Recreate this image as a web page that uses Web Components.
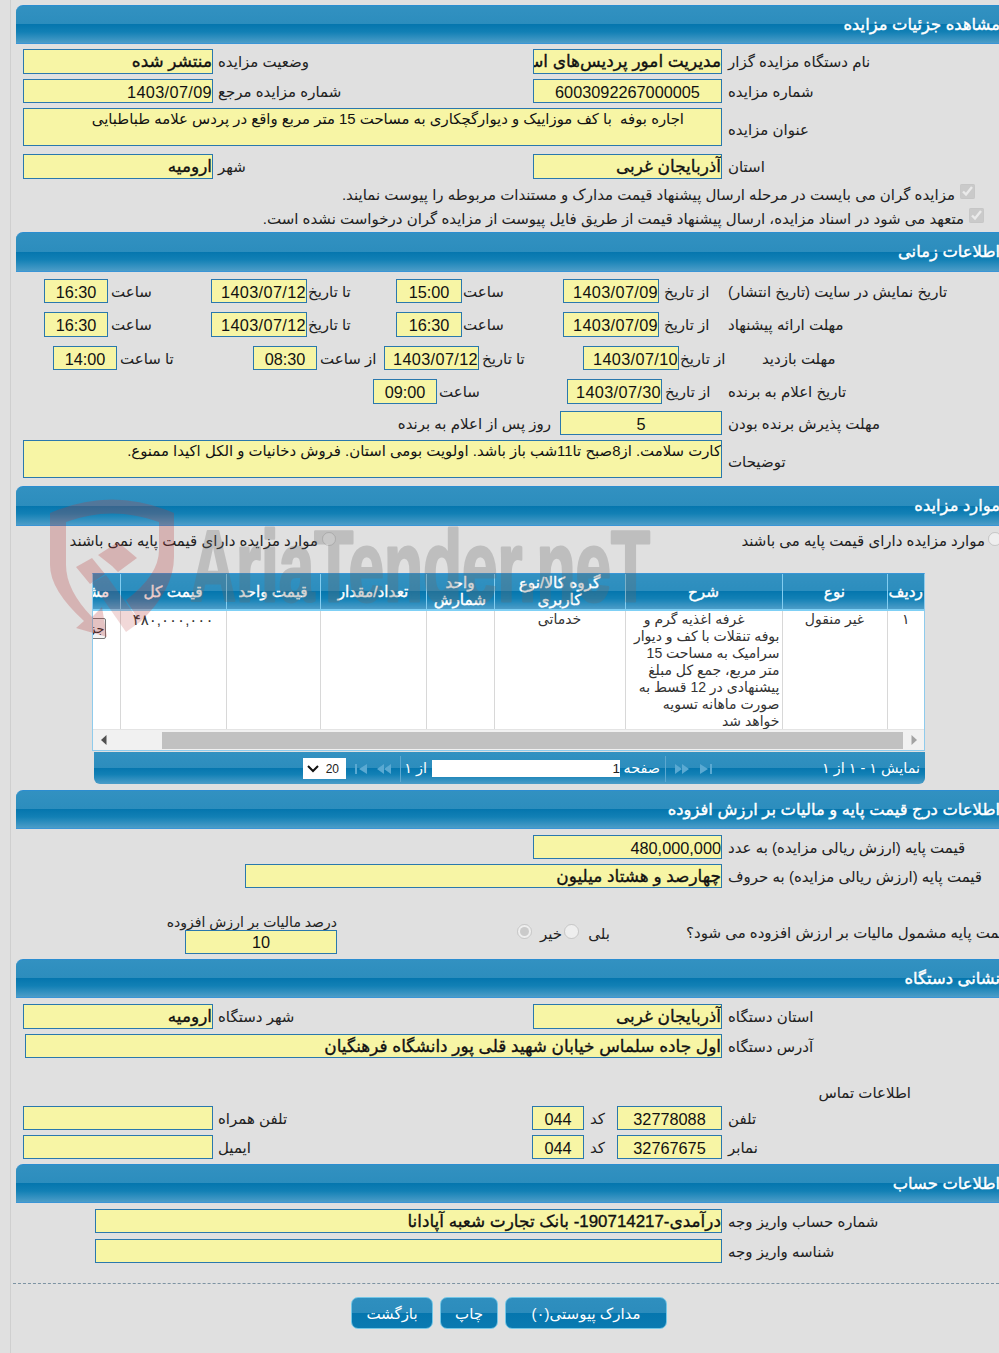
<!DOCTYPE html>
<html lang="fa"><head><meta charset="utf-8"><title>مشاهده جزئیات مزایده</title>
<style>
html,body{margin:0;padding:0;overflow:hidden;background:#e0e0e0;height:1353px}
body{font-family:"Liberation Sans","DejaVu Sans",sans-serif;color:#1c1c1c}
</style></head><body>
<x-page>
<x-head t="5" h="39">مشاهده جزئیات مزایده</x-head>
<x-row t="5" h="25"><x-l w="277">نام دستگاه مزایده گزار</x-l><x-box w="189" b>مدیریت امور پردیس‌های استان آذربایجان غربی</x-box><x-l w="320" pad="5">وضعیت مزایده</x-l><x-box w="190" b>منتشر شده</x-box></x-row>
<x-row t="5" h="24"><x-l w="277">شماره مزایده</x-l><x-box w="189" c>6003092267000005</x-box><x-l w="320" pad="5">شماره مزایده مرجع</x-l><x-box w="190">1403/07/09</x-box></x-row>
<x-row t="5" h="38"><x-l w="277" pt="4">عنوان مزایده</x-l><x-box w="699" m pr="37">اجاره بوفه  با کف موزاییک و دیوارگچکاری به مساحت 15 متر مربع واقع در پردس علامه طباطبایی</x-box></x-row>
<x-row t="8" h="25"><x-l w="277">استان</x-l><x-box w="189" b>آذربایجان غربی</x-box><x-l w="320" pad="5">شهر</x-l><x-box w="190" b>ارومیه</x-box></x-row>
<x-row t="3" h="24"><x-check w="15" pr="24" top="2" type="checkbox"></x-check><x-l w="700" r pr="5">مزایده گران می بایست در مرحله ارسال پیشنهاد قیمت مدارک و مستندات مربوطه را پیوست نمایند.</x-l></x-row>
<x-row t="0" h="24"><x-check w="15" pr="15" top="2" type="checkbox"></x-check><x-l w="800" r pr="5">متعهد می شود در اسناد مزایده، ارسال پیشنهاد قیمت از طریق فایل پیوست از مزایده گران درخواست نشده است.</x-l></x-row>
<x-head t="2" h="40">اطلاعات زمانی</x-head>
<x-row t="7" h="24"><x-l w="277">تاریخ نمایش در سایت (تاریخ انتشار)</x-l><x-l w="63" pad="5">از تاریخ</x-l><x-box w="96">1403/07/09</x-box><x-l w="101" pad="1">ساعت</x-l><x-box w="66" c>15:00</x-box><x-l w="89" pad="1">تا تاریخ</x-l><x-box w="96">1403/07/12</x-box><x-l w="103" pad="3">ساعت</x-l><x-box w="64" c>16:30</x-box></x-row>
<x-row t="9" h="25"><x-l w="277">مهلت ارائه پیشنهاد</x-l><x-l w="63" pad="5">از تاریخ</x-l><x-box w="96">1403/07/09</x-box><x-l w="101" pad="1">ساعت</x-l><x-box w="66" c>16:30</x-box><x-l w="89" pad="1">تا تاریخ</x-l><x-box w="96">1403/07/12</x-box><x-l w="103" pad="3">ساعت</x-l><x-box w="64" c>16:30</x-box></x-row>
<x-row t="9" h="24"><x-l w="275" pad="38">مهلت بازدید</x-l><x-l w="45" pad="1">از تاریخ</x-l><x-box w="96">1403/07/10</x-box><x-l w="104" pad="3">تا تاریخ</x-l><x-box w="95">1403/07/12</x-box><x-l w="67" pad="3">از ساعت</x-l><x-box w="64" c>08:30</x-box><x-l w="136" pad="3">تا ساعت</x-l><x-box w="64" c>14:00</x-box></x-row>
<x-row t="9" h="25"><x-l w="292" pad="21">تاریخ اعلام به برنده</x-l><x-l w="45" pad="3">از تاریخ</x-l><x-box w="95">1403/07/30</x-box><x-l w="130" pad="2">ساعت</x-l><x-box w="64" c>09:00</x-box></x-row>
<x-row t="7" h="24"><x-l w="277">مهلت پذیرش برنده بودن</x-l><x-box w="162" c>5</x-box><x-l w="300" r pr="9">روز پس از اعلام به برنده</x-l></x-row>
<x-row t="5" h="38"><x-l w="277" pt="4">توضیحات</x-l><x-box w="699" m>کارت سلامت. از8صبح تا11شب باز باشد. اولویت بومی استان. فروش دخانیات و الکل اکیدا ممنوع.</x-box></x-row>
<x-head t="8" h="40">موارد مزایده</x-head>
<x-row t="2" h="24"><x-check w="14" pr="0" off="3" top="4" type="radio"></x-check><x-l w="400" r pr="0">موارد مزایده دارای قیمت پایه می باشند</x-l><x-check w="14" pr="0" top="4" gap="249" type="radio"></x-check><x-l w="300" r pr="4">موارد مزایده دارای قیمت پایه نمی باشند</x-l></x-row>
<x-grid t="21"></x-grid>
<x-pager></x-pager>
<x-head t="6" h="39">اطلاعات درج قیمت پایه و مالیات بر ارزش افزوده</x-head>
<x-row t="6" h="24"><x-l w="277">قیمت پایه (ارزش ریالی مزایده) به عدد</x-l><x-box w="189">480,000,000</x-box></x-row>
<x-row t="5" h="24"><x-l w="277">قیمت پایه (ارزش ریالی مزایده) به حروف</x-l><x-box w="477" b>چهارصد و هشتاد میلیون</x-box></x-row>
<x-tax></x-tax>
<x-head t="5" h="39">نشانی دستگاه</x-head>
<x-row t="6" h="25"><x-l w="277">استان دستگاه</x-l><x-box w="189" b>آذربایجان غربی</x-box><x-l w="320" pad="5">شهر دستگاه</x-l><x-box w="190" b>ارومیه</x-box></x-row>
<x-row t="5" h="24"><x-l w="277">آدرس دستگاه</x-l><x-box w="697" b>اول جاده سلماس خیابان شهید قلی پور دانشگاه فرهنگیان</x-box></x-row>
<x-row t="25" h="19"><x-l w="999" r pr="88">اطلاعات تماس</x-l></x-row>
<x-row t="4" h="24"><x-l w="277">تلفن</x-l><x-box w="105" c>32778088</x-box><x-l w="33" pad="6">کد</x-l><x-box w="52" c>044</x-box><x-l w="319" pad="5">تلفن همراه</x-l><x-box w="190"></x-box></x-row>
<x-row t="5" h="24"><x-l w="277">نمابر</x-l><x-box w="105" c>32767675</x-box><x-l w="33" pad="6">کد</x-l><x-box w="52" c>044</x-box><x-l w="319" pad="5">ایمیل</x-l><x-box w="190"></x-box></x-row>
<x-head t="5" h="39">اطلاعات حساب</x-head>
<x-row t="6" h="24"><x-l w="277">شماره حساب واریز وجه</x-l><x-box w="627" b>درآمدی-190714217- بانک تجارت شعبه آپادانا</x-box></x-row>
<x-row t="6" h="24"><x-l w="277">شناسه واریز وجه</x-l><x-box w="627"></x-box></x-row>
<x-actions></x-actions>
<x-watermark></x-watermark>
</x-page>
<script>
const base=`*,:host{box-sizing:border-box}`;
const FF=`"Liberation Sans","DejaVu Sans",sans-serif`;
const HEADBG=`linear-gradient(to bottom,#3291c1 0,#2c8dbd 50%,#0576ae 50%,#1280b5 70%,#4c9dc8 100%)`;
function def(name,render){
  customElements.define(name,class extends HTMLElement{
    constructor(){super();this.attachShadow({mode:'open'});}
    connectedCallback(){
      const a=n=>this.getAttribute(n);
      this.shadowRoot.innerHTML=render(a,n=>this.hasAttribute(n),this);
    }
  });
}
def('x-page',()=>`<style>${base}:host{display:block;position:relative;width:999px;height:1353px;overflow:hidden;background:linear-gradient(#cfcfcf,#cfcfcf) 10px 0/1px 100% no-repeat #e0e0e0}</style><slot></slot>`);
def('x-head',(a)=>`<style>${base}:host{display:block;height:${a('h')}px;margin:${a('t')}px -12px 0 16px;background:${HEADBG};border-top:1px solid #2b8dd0;border-bottom:1px solid #3a95d6;border-top-left-radius:7px;direction:rtl;color:#fff;font:16.4px/36px ${FF};-webkit-text-stroke:.4px #fff;padding-right:11px;white-space:nowrap;overflow:hidden}</style><slot></slot>`);
def('x-row',(a)=>`<style>${base}:host{display:flex;direction:rtl;align-items:stretch;height:${a('h')}px;margin-top:${a('t')}px;width:999px;font:15px/1 ${FF}}</style><slot></slot>`);
def('x-l',(a,h)=>`<style>${base}:host{display:flex;align-items:center;flex:none;width:${a('w')}px;justify-content:${h('r')?'flex-start':'flex-end'};padding-left:${a('pad')||6}px;padding-right:${a('pr')||0}px;padding-top:${a('pt')||0}px;white-space:nowrap;color:#222;height:100%}span{display:block}</style><span><slot></slot></span>`);
def('x-box',(a,h,el)=>`<style>${base}:host{display:block;flex:none;width:${a('w')}px;height:100%;background:#f7f5a5;border:1px solid #2a78ad;color:#111;overflow:hidden;white-space:${h('m')?'pre-wrap':'nowrap'};text-align:${h('c')?'center':'right'};direction:rtl;font:${h('m')?'14.9px/20px':h('b')?'16.9px/23px':'16.3px/24px'} ${FF};${h('b')?'-webkit-text-stroke:.35px #111;':''}${el.textContent.includes('/')?'letter-spacing:.35px;':''}padding-right:${a('pr')||0}px}</style><slot></slot>`);
def('x-check',(a)=>`<style>${base}:host{display:flex;flex:none;align-items:flex-start;width:${+a('w')+ +a('pr')}px;padding-right:${a('pr')}px;margin-right:${a('gap')||0}px}input{margin:0;margin-right:${a('off')?-a('off'):0}px;width:${a('w')}px;height:${a('w')}px;flex:none;position:relative;top:${a('top')||0}px}</style><input type="${a('type')}" disabled ${a('type')=='checkbox'?'checked':''}>`);
def('x-grid',(a)=>{
 const ths=['ردیف','نوع','شرح','گروه کالا/نوع<br>کاربری','واحد<br>شمارش','تعداد/مقدار','قیمت واحد','قیمت کل','مشاهده'];
 const ws=[37,105,157,131,68,106,94,106,72];
 return `<style>${base}:host{display:block;width:833px;margin:${a('t')}px 0 0 92px;border:1px solid #8fcbec;border-top:1px solid #3a95d6;direction:rtl;background:#fff;font-family:${FF}}
 .wrap{overflow:hidden;height:155px;direction:rtl}
 table{border-collapse:collapse;table-layout:fixed;width:${ws.reduce((x,y)=>x+y)}px;direction:rtl}
 th{height:35px;background:${HEADBG};color:#fff;font:15.3px/17px ${FF};-webkit-text-stroke:.4px #fff;border-left:1px solid #83cdf0;border-bottom:2px solid #7fd0f5;padding:0 0 1px;white-space:nowrap;overflow:hidden}
 td{height:120px;vertical-align:top;border-left:1px solid #d8d8d8;border-bottom:1px solid #d8d8d8;font-size:14px;line-height:17px;color:#333;padding:0 2px 0;text-align:center;overflow:hidden}
 td.d{text-align:right;white-space:nowrap}
 td.p{text-align:right;padding-right:12px;font-size:15px}
 .view{display:block;height:21px;width:50px;border:1px solid #777;border-radius:2px;background:#f4f4f4;margin:7px 14px 0 0;font-size:13px;line-height:19px;color:#222;text-align:right}
 .bar{display:flex;height:21px;align-items:center;direction:ltr;background:#f1f1f1;border-top:1px solid #e4e4e4}
 .arr{width:69px;flex:none;padding-left:8px;display:flex;align-items:center}
 .arr2{width:21px;flex:none;display:flex;justify-content:center}
 .th{flex:1;height:17px;background:#c1c1c1}
 </style><div class="wrap"><table><colgroup>${ws.map(w=>`<col style="width:${w}px">`).join('')}</colgroup><tr>${ths.map(t=>`<th>${t}</th>`).join('')}</tr>
 <tr><td>۱</td><td>غیر منقول</td><td class="d"><span style="padding-right:35px">غرفه اغذیه گرم و</span><br>بوفه تنقلات با کف و دیوار<br>سرامیک به مساحت 15<br>متر مربع، جمع کل مبلغ<br>پیشنهادی در 12 قسط به<br>صورت ماهانه تسویه<br>خواهد شد</td><td>خدماتی</td><td></td><td></td><td></td><td class="p">۴۸۰,۰۰۰,۰۰۰</td><td style="padding:0"><span class="view">جزئیات</span></td></tr></table></div>
 <div class="bar"><div class="arr"><svg width="6" height="10"><path d="M5.5 0v10L0 5z" fill="#505050"/></svg></div><div class="th"></div><div class="arr2"><svg width="6" height="10"><path d="M.5 0v10L6 5z" fill="#a3a3a3"/></svg></div></div>`;
});
def('x-pager',()=>{
 const ic=(p,w,m)=>`<svg style="flex:none;margin-right:${m}px;display:block" width="${w}" height="10" viewBox="0 0 ${w} 10"><path d="${p}" fill="#5aa9d2"/></svg>`;
 return `<style>${base}:host{display:flex;direction:rtl;align-items:center;height:32px;width:831px;margin:1px 0 0 94px;background:${HEADBG};border-radius:0 0 6px 6px;color:#fff;font:14.4px/1 ${FF};white-space:nowrap;padding-top:1px}
 .info{width:213px;flex:none;padding-right:5px}
 .sep{width:1px;height:26px;background:#5ca8d0;flex:none}
 .c{flex:none;padding-right:5px}
 .in{flex:none;width:188px;height:17px;background:#fff;color:#222;text-align:right;font-size:13.5px;line-height:17px}
 .sel{flex:none;width:43px;height:21px;background:#fff;color:#222;font-size:12px;display:flex;align-items:center;justify-content:space-between;direction:ltr;padding:0 7px 0 4px;margin-right:9px}
 </style><div class="info">نمایش ۱ - ۱ از ۱</div>${ic('M0 0v10L8 5zM10 0h2v10h-2z',12,0)}${ic('M0 0v10L7 5zM7 0v10L14 5z',14,11)}<div class="sep" style="margin-right:9px"></div><div class="c" style="width:45px">صفحه</div><div class="in">1</div><div class="c" style="width:31px">از ۱</div><div class="sep"></div>${ic('M7 0v10L0 5zM14 0v10L7 5z',14,9)}${ic('M0 0h2v10H0zM12 0v10L4 5z',12,10)}<div class="sel"><svg width="12" height="8"><path d="M1 1l5 5 5-5" fill="none" stroke="#111" stroke-width="2"/></svg><span>20</span></div>`;
});
def('x-tax',()=>`<style>${base}:host{display:flex;direction:rtl;width:999px;height:40px;margin-top:26px;font:15px/1 ${FF};color:#222;white-space:nowrap}
 .q{width:313px;flex:none;padding-top:11px;display:flex;justify-content:flex-end}
 .o{display:flex;flex:none;width:349px;padding:10px 76px 0 0;align-items:flex-start}
 .v{flex:none;width:172px;display:flex;flex-direction:column;align-items:flex-start}
 .lab{height:16px;line-height:16px;width:172px;text-align:right;font-size:14px}
 .box{width:152px;height:24px;background:#f7f5a5;border:1px solid #2a78ad;text-align:center;font-size:16.3px;line-height:23px;color:#111}
 input{margin:0;width:15px;height:15px;flex:none}
 span{display:block;padding-top:2px}
 </style><div class="q"><div>قیمت پایه مشمول مالیات بر ارزش افزوده می شود؟</div></div><div class="o"><span style="width:24px">بلی</span><input type="radio" disabled style="margin-right:7px"><span style="margin-right:2px;width:22px">خیر</span><input type="radio" disabled checked style="margin-right:8px"></div><div class="v"><div class="lab">درصد مالیات بر ارزش افزوده</div><div class="box">10</div></div>`);
def('x-actions',()=>`<style>${base}:host{display:block;width:986px;margin:20px 0 0 13px;border-top:1px dashed #7d93a3;direction:rtl}
 .b{display:flex;gap:7px;margin-top:13px;padding-right:332px;direction:rtl}</style><div class="b"><x-btn w="162">مدارک پیوستی(۰)</x-btn><x-btn w="58">چاپ</x-btn><x-btn w="82">بازگشت</x-btn></div>`);
def('x-btn',(a)=>`<style>${base}:host{display:flex;flex:none;width:${a('w')}px;height:32px;align-items:center;justify-content:center;background:linear-gradient(to bottom,#2f8fbf 0,#2c8cbc 50%,#0576ae 50%,#0a7ab1 100%);border:1px solid #74c6e6;border-radius:7px;color:#fff;font:15px/1 ${FF}}</style><slot></slot>`);
def('x-watermark',()=>`<style>:host{position:absolute;left:0;top:0;width:999px;height:700px;pointer-events:none}svg{position:absolute;left:0;top:0}</style>
<svg width="999" height="700" viewBox="0 0 999 700">
<g fill="#b83a3a" fill-opacity=".27">
<path fill-rule="evenodd" d="M50 513Q112 486 174 513V557Q174 590 140 622L126 600Q159 575 159 550V522Q112 505 66 522V565Q66 590 92 617L102 607L107 637L76 628L84 621Q50 590 50 565Z"/>
<path d="M76 567L92 558L105 574L90 584ZM98 555L118 542L137 558L118 572L112 566Z"/>
<path d="M92 583L106 575L140 622L126 632Z" fill-opacity=".2"/>
</g>
<text x="190" y="601" font-family="Liberation Sans" font-weight="bold" font-size="100" textLength="460" lengthAdjust="spacingAndGlyphs" fill="#6a6a6a" stroke="#6a6a6a" stroke-width="3" stroke-linejoin="round" opacity=".28">AriaTender.neT</text>
</svg>`);
</script>
</body></html>
